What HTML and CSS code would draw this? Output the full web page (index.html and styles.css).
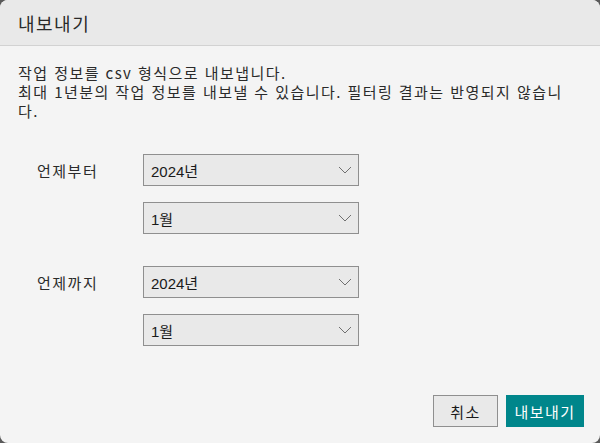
FILE: index.html
```html
<!DOCTYPE html>
<html lang="ko">
<head>
<meta charset="utf-8">
<title>내보내기</title>
<link rel="stylesheet" href="styles.css">
</head>
<body>
<div class="dialog">
  <div class="header">내보내기</div>
  <div class="content">
    <p class="desc">작업 정보를 csv 형식으로 내보냅니다.<br>최대 1년분의 작업 정보를 내보낼 수 있습니다. 필터링 결과는 반영되지 않습니<br>다.</p>
    <div class="group">
      <div class="label">언제부터</div>
      <div class="selects">
        <div class="select"><span>2024년</span><svg class="chev" width="14" height="8" viewBox="0 0 14 8"><path d="M1 1 L7 7 L13 1" fill="none" stroke="#707070" stroke-width="1"/></svg></div>
        <div class="select"><span>1월</span><svg class="chev" width="14" height="8" viewBox="0 0 14 8"><path d="M1 1 L7 7 L13 1" fill="none" stroke="#707070" stroke-width="1"/></svg></div>
      </div>
    </div>
    <div class="group">
      <div class="label">언제까지</div>
      <div class="selects">
        <div class="select"><span>2024년</span><svg class="chev" width="14" height="8" viewBox="0 0 14 8"><path d="M1 1 L7 7 L13 1" fill="none" stroke="#707070" stroke-width="1"/></svg></div>
        <div class="select"><span>1월</span><svg class="chev" width="14" height="8" viewBox="0 0 14 8"><path d="M1 1 L7 7 L13 1" fill="none" stroke="#707070" stroke-width="1"/></svg></div>
      </div>
    </div>
  </div>
  <div class="footer">
    <button class="btn cancel">취소</button>
    <button class="btn primary">내보내기</button>
  </div>
</div>
</body>
</html>
```
FILE: styles.css
```css
html, body {
  margin: 0;
  padding: 0;
  background: #5a5a5a;
}
body {
  width: 600px;
  height: 443px;
  font-family: "Noto Sans CJK KR", "Noto Sans", sans-serif;
  color: #2a2a2a;
}
.dialog {
  width: 600px;
  height: 443px;
  background: #f4f4f4;
  border-radius: 8px;
  overflow: hidden;
  display: flex;
  flex-direction: column;
}
.header {
  height: 45px;
  background: #e9e9e9;
  border-bottom: 1px solid #d2d2d2;
  padding-left: 18px;
  display: flex;
  align-items: center;
  font-size: 18px;
  letter-spacing: 1.5px;
  color: #2a2a2a;
}
.content {
  flex: 1;
  padding: 17px 18px 0 18px;
}
.desc {
  margin: 0;
  font-size: 15px;
  line-height: 19px;
  letter-spacing: 1.45px;
  white-space: nowrap;
  color: #2a2a2a;
}
.group {
  display: flex;
  margin-top: 34px;
}
.group + .group {
  margin-top: 32px;
}
.label {
  width: 106px;
  padding-left: 19px;
  height: 32px;
  display: flex;
  align-items: center;
  font-size: 15px;
  letter-spacing: 1.5px;
  color: #2a2a2a;
}
.selects {
  display: flex;
  flex-direction: column;
  gap: 16px;
}
.select {
  box-sizing: border-box;
  width: 216px;
  height: 32px;
  border: 1px solid #8f8f8f;
  background: #e9e9e9;
  display: flex;
  align-items: center;
  justify-content: space-between;
  padding: 0 6px 0 7px;
  font-family: "Liberation Sans", "Noto Sans CJK KR", sans-serif;
  font-size: 15px;
  color: #1a1a1a;
}
.chev {
  display: block;
}
.footer {
  display: flex;
  justify-content: flex-end;
  gap: 8px;
  padding: 0 16px 16px 0;
}
.btn {
  height: 32px;
  font-family: "Noto Sans CJK KR", sans-serif;
  font-size: 15px;
  letter-spacing: 1.5px;
  border-radius: 0;
  padding: 0;
  margin: 0;
}
.cancel {
  width: 65px;
  background: #e9e9e9;
  border: 1px solid #8f8f8f;
  color: #1a1a1a;
}
.primary {
  width: 78px;
  background: #00868b;
  border: none;
  color: #fff;
}
```
